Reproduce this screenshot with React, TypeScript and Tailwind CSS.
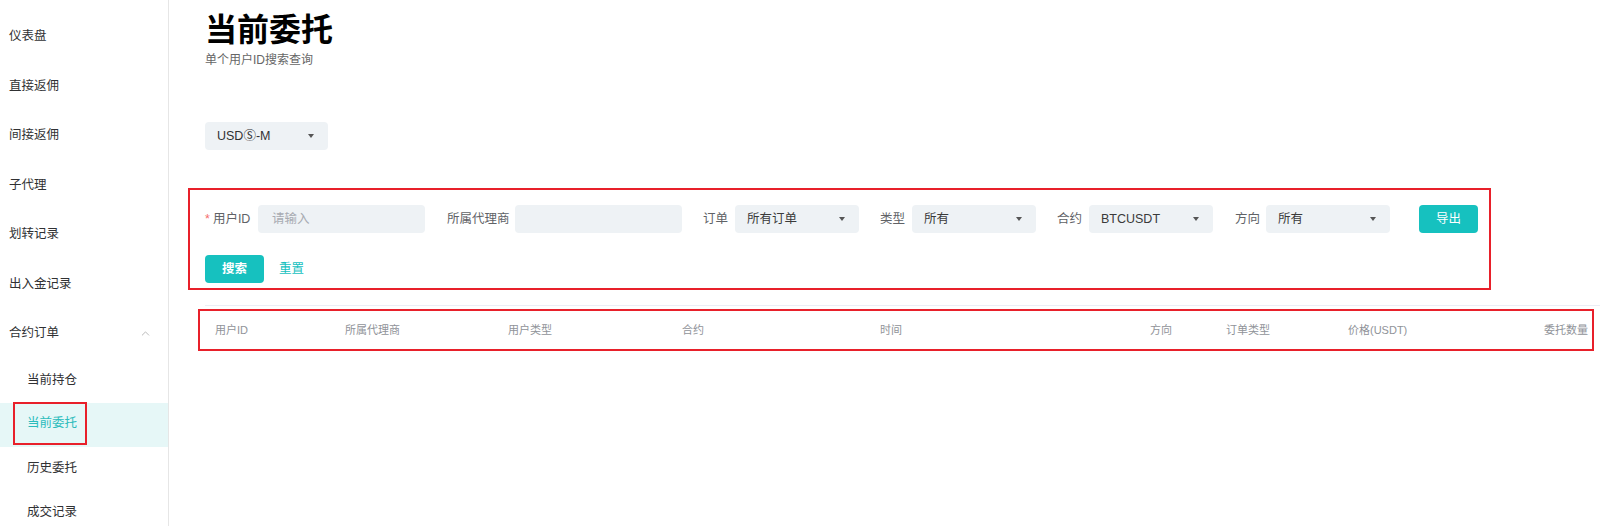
import React from 'react';
import { ChevronUp } from 'lucide-react';

const FONT = { fontFamily: '"Liberation Sans", "Noto Sans CJK SC", sans-serif' };

const menu = ['仪表盘', '直接返佣', '间接返佣', '子代理', '划转记录', '出入金记录'];
const subMenu = ['当前持仓', '当前委托', '历史委托', '成交记录'];

const Caret = () => (
  <span className="w-0 h-0 border-l-[3px] border-r-[3px] border-t-[4px] border-l-transparent border-r-transparent border-t-[#555]"></span>
);

const Select = ({ value, w = 'w-[124px]' }: { value: string; w?: string }) => (
  <div className={`${w} h-[28px] ml-[7px] bg-[#eef2f5] rounded-[4px] flex items-center justify-between pl-[12px] pr-[14px] text-[#3a3a3a]`}>
    <span>{value}</span>
    <Caret />
  </div>
);

const columns = [
  { label: '用户ID', w: 'w-[130px]' },
  { label: '所属代理商', w: 'w-[163px]' },
  { label: '用户类型', w: 'w-[174px]' },
  { label: '合约', w: 'w-[198px]' },
  { label: '时间', w: 'w-[270px]' },
  { label: '方向', w: 'w-[76px]' },
  { label: '订单类型', w: 'w-[122px]' },
  { label: '价格(USDT)', w: 'w-[130px]' },
];

export default function App() {
  return (
    <div className="flex h-[526px] overflow-hidden bg-white text-[12.5px]" style={FONT}>
      {/* 侧边栏 */}
      <aside className="w-[169px] shrink-0 border-r border-[#e6e6e6] pt-[12px] text-[#303133]">
        {menu.map(m => (
          <div key={m} className="h-[49.5px] flex items-center pl-[9px]">{m}</div>
        ))}
        <div className="h-[49.5px] flex items-center justify-between pl-[9px] pr-[16px]">
          <span>合约订单</span>
          <ChevronUp size={13} strokeWidth={1.5} className="text-[#aaa]" />
        </div>
        {subMenu.map(s =>
          s === '当前委托' ? (
            <div key={s} className="h-[44px] flex items-center bg-[#e6f7f7]">
              <span className="ml-[13px] h-[43px] -mt-[3px] flex items-center pl-[12px] pr-[8px] border-2 border-[#e8202a] text-[#2bbcbc]">{s}</span>
            </div>
          ) : (
            <div key={s} className="h-[44px] flex items-center pl-[27px]">{s}</div>
          )
        )}
      </aside>

      {/* 主体 */}
      <main className="flex-1 pl-[19px]">
        <h1 className="ml-[17px] mt-[10px] text-[32px] leading-[40px] font-bold text-black">当前委托</h1>
        <p className="ml-[17px] mt-[2px] text-[12px] leading-[16px] text-[#666]">单个用户ID搜索查询</p>

        <div className="ml-[17px] mt-[54px] w-[123px] h-[28px] bg-[#eef2f5] rounded-[4px] flex items-center justify-between pl-[12px] pr-[14px] text-[#303133]">
          <span>USDⓈ-M</span>
          <Caret />
        </div>

        {/* 搜索表单 */}
        <div className="mt-[38px] w-[1303px] border-2 border-[#e8202a] pt-[15px] pb-[5px] pl-[15px] text-[#606266]">
          <div className="flex items-center h-[28px]">
            <span className="w-[46px] whitespace-nowrap"><span className="text-[#f56c6c] mr-[3px]">*</span>用户ID</span>
            <div className="w-[167px] h-[28px] ml-[7px] bg-[#eef2f5] rounded-[4px] flex items-center pl-[14px] text-[#a8abb2]">请输入</div>
            <span className="ml-[22px] w-[61px] whitespace-nowrap">所属代理商</span>
            <div className="w-[167px] h-[28px] ml-[7px] bg-[#eef2f5] rounded-[4px]"></div>
            <span className="ml-[21px] w-[25px] whitespace-nowrap">订单</span>
            <Select value="所有订单" />
            <span className="ml-[21px] w-[25px] whitespace-nowrap">类型</span>
            <Select value="所有" />
            <span className="ml-[21px] w-[25px] whitespace-nowrap">合约</span>
            <Select value="BTCUSDT" />
            <span className="ml-[22px] w-[24px] whitespace-nowrap">方向</span>
            <Select value="所有" />
            <button className="ml-[29px] w-[59px] h-[28px] rounded-[4px] bg-[#16c1bf] text-white">导出</button>
          </div>
          <div className="flex items-center h-[28px] mt-[22px]">
            <button className="w-[59px] h-[28px] rounded-[4px] bg-[#16c1bf] text-white font-bold">搜索</button>
            <span className="ml-[15px] text-[#16c1bf]">重置</span>
          </div>
        </div>

        {/* 表头 */}
        <div className="ml-[17px] mt-[15px] h-px bg-[#ebeef5]"></div>
        <div className="ml-[10px] mt-[3px] w-[1396px] h-[42px] border-2 border-[#e8202a] flex items-center text-[11px] text-[#909399]">
          {columns.map(c => (
            <div key={c.label} className={`${c.w} shrink-0 pl-[15px] whitespace-nowrap`}>{c.label}</div>
          ))}
          <div className="flex-1 text-right pr-[4px]">委托数量</div>
        </div>
      </main>
    </div>
  );
}
